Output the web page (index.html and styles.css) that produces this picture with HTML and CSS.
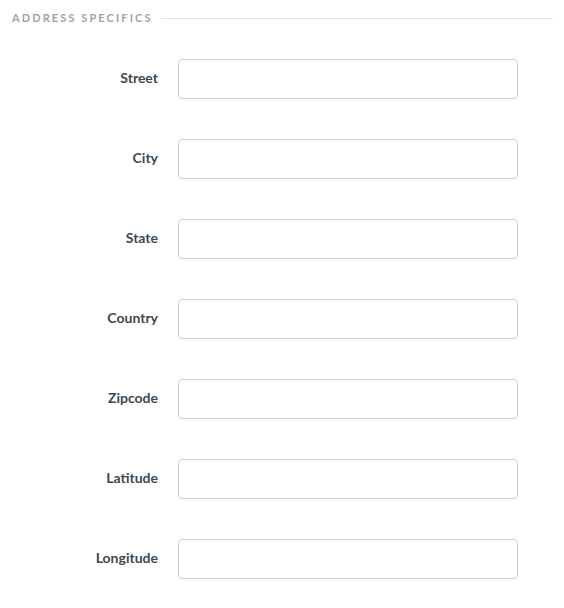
FILE: index.html
```html
<!DOCTYPE html>
<html>
<head>
<meta charset="utf-8">
<link rel="stylesheet" href="styles.css">
</head>
<body>
<div class="section">
  <div class="heading"><span class="heading-text">Address Specifics</span><span class="heading-line"></span></div>
  <div class="rows">
    <div class="row"><label class="label">Street</label><input class="field" type="text"></div>
    <div class="row"><label class="label">City</label><input class="field" type="text"></div>
    <div class="row"><label class="label">State</label><input class="field" type="text"></div>
    <div class="row"><label class="label">Country</label><input class="field" type="text"></div>
    <div class="row"><label class="label">Zipcode</label><input class="field" type="text"></div>
    <div class="row"><label class="label">Latitude</label><input class="field" type="text"></div>
    <div class="row"><label class="label">Longitude</label><input class="field" type="text"></div>
  </div>
</div>
</body>
</html>
```
FILE: styles.css
```css
html, body {
  margin: 0;
  padding: 0;
  background: #ffffff;
  font-family: Lato, "Open Sans", sans-serif;
}
.section {
  padding: 11px 11px 0 12px;
}
.heading {
  display: flex;
  align-items: center;
  gap: 8px;
  height: 14px;
}
.heading-text {
  font-size: 11px;
  font-weight: 700;
  letter-spacing: 2.1px;
  text-transform: uppercase;
  color: #9aa3ab;
  line-height: 14px;
  white-space: nowrap;
}
.heading-line {
  flex: 1;
  height: 1px;
  background: #dde1e5;
}
.rows {
  display: flex;
  flex-direction: column;
  gap: 40px;
  margin-top: 34px;
}
.row {
  display: flex;
  align-items: center;
  gap: 20px;
}
.label {
  width: 146px;
  text-align: right;
  font-size: 14px;
  line-height: 16px;
  font-weight: 700;
  color: #3d4852;
  margin-top: -2px;
}
.field {
  box-sizing: border-box;
  width: 340px;
  height: 40px;
  margin: 0;
  border: 1px solid #c9ced3;
  border-radius: 4px;
  background: #ffffff;
  outline: none;
  padding: 0 10px;
}
```
